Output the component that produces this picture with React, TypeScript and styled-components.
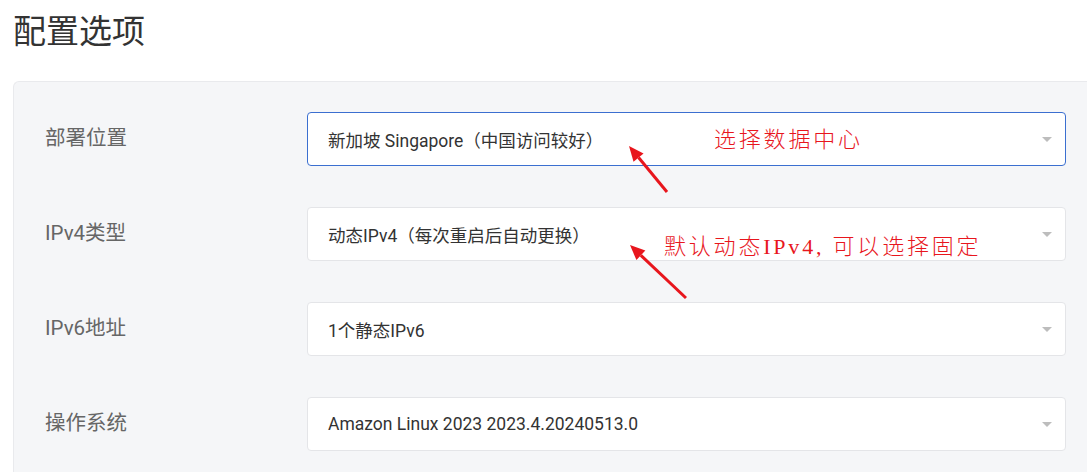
import styled, { createGlobalStyle } from 'styled-components'

const GlobalStyle = createGlobalStyle`
  html, body {
    margin: 0;
    padding: 0;
    background: #ffffff;
    overflow: hidden;
  }
  body {
    font-family: Roboto, "Noto Sans CJK SC", sans-serif;
  }
`

const Page = styled.div`
  position: relative;
  padding: 0 0 0 13px;
  width: 1087px;
  height: 472px;
  box-sizing: border-box;
  overflow: hidden;
`

const Title = styled.h1`
  margin: 0;
  padding-top: 10px;
  font-size: 33px;
  line-height: 38px;
  font-weight: 400;
  color: #333333;
  font-family: "Noto Sans CJK SC", sans-serif;
`

const Panel = styled.div`
  margin-top: 33px;
  width: 1074px;
  height: 391px;
  box-sizing: border-box;
  padding: 30px 0 0 31px;
  background: #f5f6f8;
  border: 1px solid #e9eaed;
  border-right: none;
  border-bottom: none;
  border-radius: 6px 0 0 0;
  display: grid;
  grid-template-columns: 262px 759px;
  grid-auto-rows: 54px;
  row-gap: 41px;
`

const Label = styled.div`
  align-self: center;
  margin-top: -6px;
  font-size: 20.5px;
  color: #666666;
  font-family: Roboto, "Noto Sans CJK SC", sans-serif;
`

const Select = styled.div<{ $active?: boolean }>`
  position: relative;
  display: flex;
  align-items: center;
  box-sizing: border-box;
  height: 54px;
  padding: 0 40px 0 20px;
  background: #ffffff;
  border: 1px solid ${({ $active }) => ($active ? '#3b6fd0' : '#e4e5e8')};
  border-radius: 4px;
  font-size: 17.5px;
  color: #333333;

  &::after {
    content: '';
    position: absolute;
    right: 13px;
    top: 50%;
    margin-top: -2px;
    width: 0;
    height: 0;
    border-left: 5px solid transparent;
    border-right: 5px solid transparent;
    border-top: 5px solid #bdbdbd;
  }
`

const Note = styled.div<{ $x: number; $y: number }>`
  position: absolute;
  left: ${({ $x }) => $x}px;
  top: ${({ $y }) => $y}px;
  font-family: "Liberation Serif", "Noto Sans CJK SC", serif;
  font-size: 22px;
  line-height: 26px;
  letter-spacing: 2.8px;
  color: #e8161d;
  font-weight: 300;
  white-space: nowrap;
`

const ArrowSvg = styled.svg`
  position: absolute;
  left: 0;
  top: 0;
  pointer-events: none;
`

const Arrow = ({ x1, y1, x2, y2 }: { x1: number; y1: number; x2: number; y2: number }) => {
  const dx = x2 - x1
  const dy = y2 - y1
  const len = Math.hypot(dx, dy)
  const ux = dx / len
  const uy = dy / len
  const head = 15
  const half = 6.5
  const bx = x2 - ux * head
  const by = y2 - uy * head
  const p1 = `${x2},${y2}`
  const p2 = `${bx - uy * half},${by + ux * half}`
  const p3 = `${bx + uy * half},${by - ux * half}`
  return (
    <g>
      <line x1={x1} y1={y1} x2={bx} y2={by} stroke="#e8161d" strokeWidth={3} />
      <polygon points={`${p1} ${p2} ${p3}`} fill="#e8161d" />
    </g>
  )
}

const rows = [
  { label: '部署位置', value: '新加坡 Singapore（中国访问较好）', active: true },
  { label: 'IPv4类型', value: '动态IPv4（每次重启后自动更换）' },
  { label: 'IPv6地址', value: '1个静态IPv6' },
  { label: '操作系统', value: 'Amazon Linux 2023 2023.4.20240513.0' },
]

export default function App() {
  return (
    <>
      <GlobalStyle />
      <Page>
        <Title>配置选项</Title>
        <Panel>
          {rows.flatMap((r) => [
            <Label key={r.label + '-l'}>{r.label}</Label>,
            <Select key={r.label + '-s'} $active={r.active}>
              {r.value}
            </Select>,
          ])}
        </Panel>
        <Note $x={714} $y={127}>选择数据中心</Note>
        <Note $x={664} $y={234}>默认动态IPv4, 可以选择固定</Note>
        <ArrowSvg width={1087} height={472}>
          <Arrow x1={667} y1={192} x2={629} y2={146} />
          <Arrow x1={686} y1={298} x2={630} y2={245} />
        </ArrowSvg>
      </Page>
    </>
  )
}
